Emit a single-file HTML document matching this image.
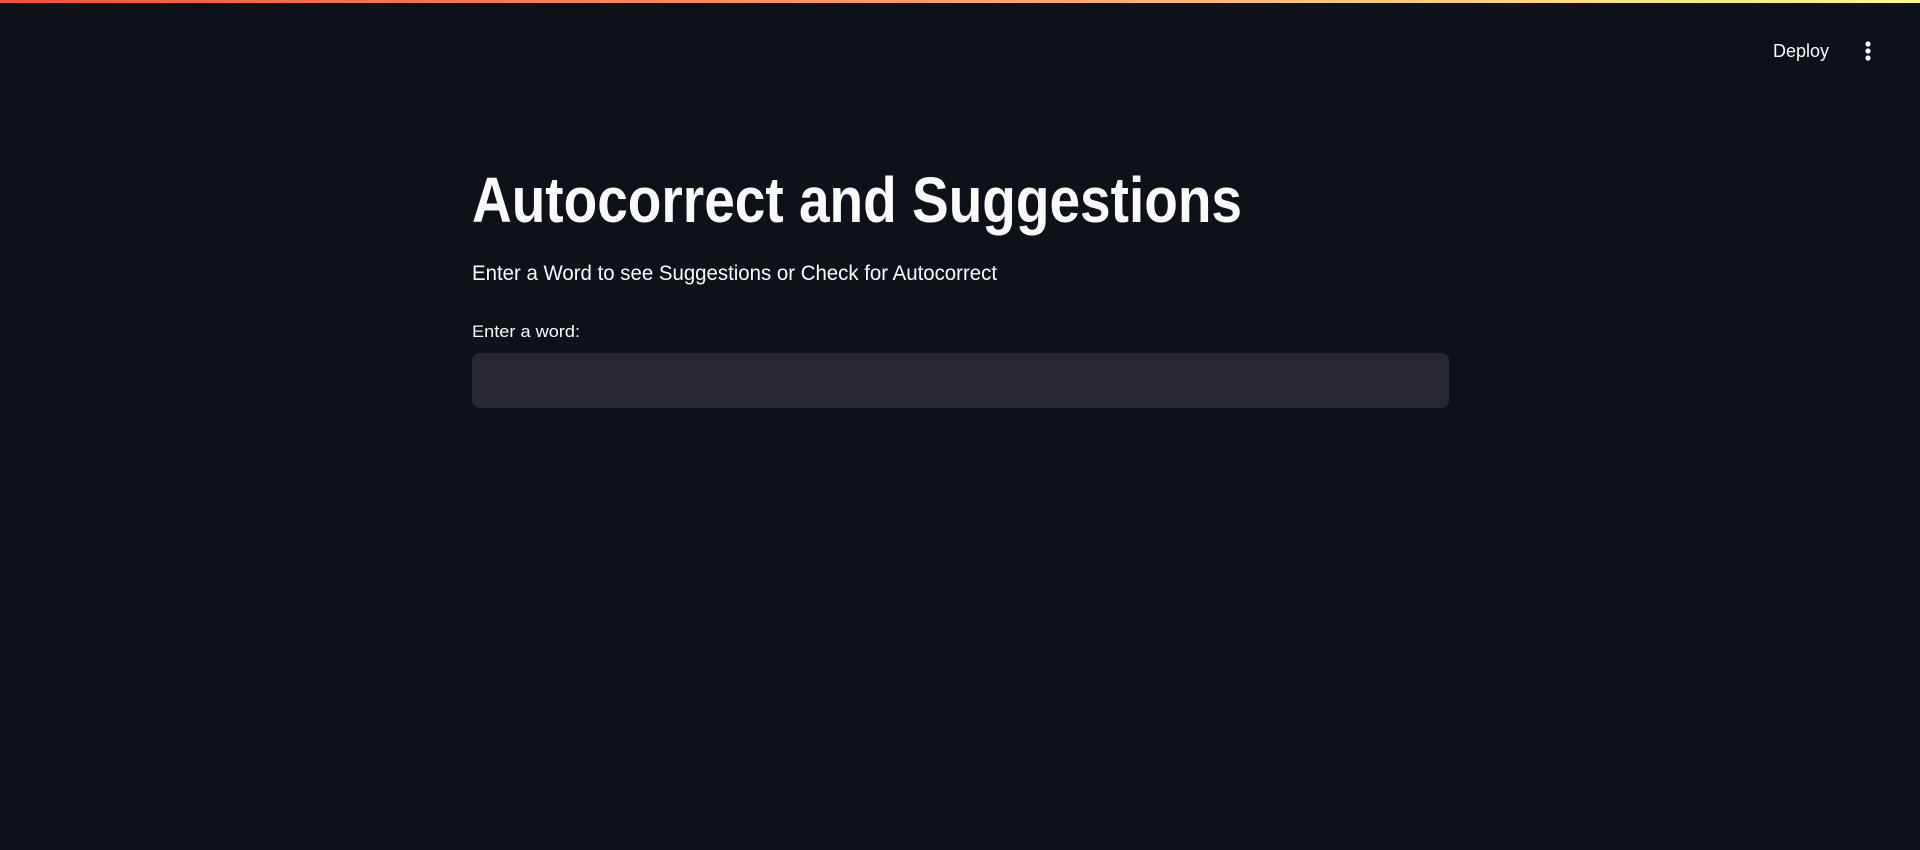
<!DOCTYPE html>
<html><head><meta charset="utf-8"><style>
html,body{margin:0;padding:0;width:1920px;height:850px;background:#0e1117;overflow:hidden;font-family:"Liberation Sans",sans-serif}
.bar{position:absolute;left:0;top:0;width:1920px;height:3px;background:linear-gradient(90deg,#ff4b4b,#fffd80)}
.input{position:absolute;left:472px;top:353px;width:977px;height:55px;background:#262730;border-radius:8px}
svg{position:absolute;left:0;top:0}
</style></head><body>
<div class="bar"></div>
<div class="input"></div>
<svg width="1920" height="850">
<text x="472" y="222" fill="#fafafa" font-family="Liberation Sans, sans-serif" font-weight="bold" font-size="64" textLength="770" lengthAdjust="spacingAndGlyphs">Autocorrect and Suggestions</text>
<text x="472" y="280" fill="#fafafa" font-family="Liberation Sans, sans-serif" font-size="21" textLength="525" lengthAdjust="spacingAndGlyphs">Enter a Word to see Suggestions or Check for Autocorrect</text>
<text x="472" y="337" fill="#fafafa" font-family="Liberation Sans, sans-serif" font-size="17" textLength="108" lengthAdjust="spacingAndGlyphs">Enter a word:</text>
<text x="1773" y="57" fill="#fafafa" font-family="Liberation Sans, sans-serif" font-size="18" textLength="56" lengthAdjust="spacingAndGlyphs">Deploy</text>
<circle cx="1868" cy="44" r="2.6" fill="#fafafa"/>
<circle cx="1868" cy="51" r="2.6" fill="#fafafa"/>
<circle cx="1868" cy="58" r="2.6" fill="#fafafa"/>
</svg>
</body></html>
